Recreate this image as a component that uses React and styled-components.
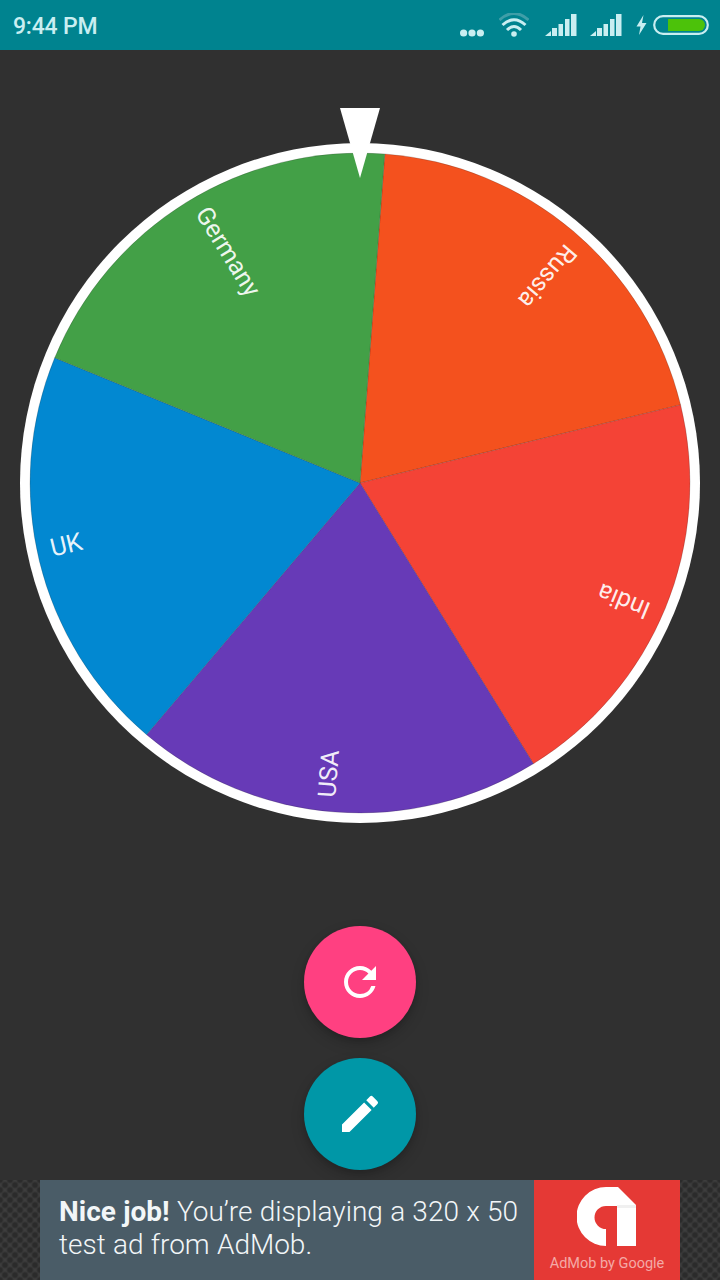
import React from "react";
import styled, { createGlobalStyle } from "styled-components";
import { MdRefresh, MdEdit } from "react-icons/md";

const GlobalStyle = createGlobalStyle`
  html, body {
    margin: 0;
    padding: 0;
    background: #303030;
    font-family: Roboto, "Noto Sans", sans-serif;
  }
`;

const Screen = styled.div`
  display: flex;
  flex-direction: column;
  width: 720px;
  height: 1280px;
  overflow: hidden;
  background: #303030;
`;

const StatusBar = styled.header`
  display: flex;
  align-items: center;
  justify-content: space-between;
  flex: 0 0 50px;
  box-sizing: border-box;
  padding: 0 11px 0 13px;
  background: #00838f;
  color: #c9eef1;
`;

const Time = styled.span`
  padding-top: 2px;
  font-size: 23px;
  font-weight: 500;
  letter-spacing: -0.2px;
`;

const StatusIcons = styled.div`
  display: flex;
  align-items: center;
`;

const StatusSlot = styled.span`
  display: flex;
  margin-left: ${p => p.$left}px;
`;

const Main = styled.main`
  display: flex;
  flex: 1;
  flex-direction: column;
  align-items: center;
`;

const WheelSvg = styled.svg`
  display: block;
  width: 680px;
  height: 715px;
  margin-top: 58px;
`;

const Label = styled.text`
  fill: #fff;
  fill-opacity: 0.92;
  font-family: Roboto, sans-serif;
  font-size: 25px;
  font-weight: 400;
`;

const Actions = styled.div`
  display: flex;
  flex-direction: column;
  gap: 20px;
  margin-top: 103px;
`;

const Fab = styled.button`
  display: flex;
  align-items: center;
  justify-content: center;
  width: 112px;
  height: 112px;
  padding: 0;
  border: 0;
  border-radius: 50%;
  background: ${p => p.$color};
  color: #fff;
  box-shadow: 0 6px 14px rgba(0, 0, 0, 0.18), 0 2px 5px rgba(0, 0, 0, 0.12);
`;

const AdStrip = styled.footer`
  display: flex;
  justify-content: center;
  flex: 0 0 100px;
  background-color: #3d3d3d;
  background-image: radial-gradient(circle, #2b2b2b 2px, transparent 4px),
    radial-gradient(circle, #2b2b2b 2px, transparent 4px);
  background-size: 10px 10px;
  background-position: 0 0, 5px 5px;
`;

const Ad = styled.div`
  display: flex;
  width: 640px;
  background: #4a5c67;
`;

const AdText = styled.p`
  flex: 1;
  margin: 0;
  padding: 15px 0 0 19px;
  color: #f2f6f8;
  font-size: 28px;
  font-weight: 300;
  line-height: 33px;
  word-spacing: 0.4px;

  b {
    font-weight: 700;
  }
`;

const AdBrand = styled.div`
  display: flex;
  flex-direction: column;
  align-items: center;
  width: 146px;
  background: #e53935;
`;

const AdLogo = styled.svg`
  display: block;
  width: 60px;
  height: 60px;
  margin-top: 7px;
`;

const AdCaption = styled.span`
  margin-top: 8px;
  color: #f4a9a6;
  font-size: 14.5px;
  white-space: nowrap;
`;

const CX = 340;
const CY = 375;
const R_OUTER = 340;
const R_INNER = 330;
const START = 4.3;
const STEP = 72;

const slices = [
  { name: "Russia", color: "#f4511e" },
  { name: "India", color: "#f44336" },
  { name: "USA", color: "#673ab7" },
  { name: "UK", color: "#0288d1" },
  { name: "Germany", color: "#43a047" }
];

function point(deg, r) {
  const a = ((deg - 90) * Math.PI) / 180;
  return [CX + r * Math.cos(a), CY + r * Math.sin(a)];
}

function slicePath(i) {
  const [x1, y1] = point(START + i * STEP, R_INNER);
  const [x2, y2] = point(START + (i + 1) * STEP, R_INNER);
  return `M${CX} ${CY}L${x1} ${y1}A${R_INNER} ${R_INNER} 0 0 1 ${x2} ${y2}Z`;
}

const Wheel = () => (
  <WheelSvg viewBox="0 0 680 715">
    <circle cx={CX} cy={CY} r={R_OUTER} fill="#fff" />
    {slices.map((s, i) => {
      const mid = START + (i + 0.5) * STEP;
      return (
        <g key={s.name}>
          <path d={slicePath(i)} fill={s.color} stroke="#222" strokeOpacity="0.5" strokeWidth="0.4" />
          <Label
            transform={`translate(${CX} ${CY}) rotate(${mid + 90}) translate(-316 -1)`}
          >
            {s.name}
          </Label>
        </g>
      );
    })}
    <polygon points="320,0 360,0 340,70" fill="#fff" />
  </WheelSvg>
);

const Dots = () => (
  <svg width="24" height="24" viewBox="0 0 24 24" fill="#c9eef1">
    <circle cx="3.6" cy="20" r="3.6" />
    <circle cx="12" cy="20" r="3.6" />
    <circle cx="20.4" cy="20" r="3.6" />
  </svg>
);

const Wifi = () => (
  <svg width="30" height="24" viewBox="0 0 30 24" fill="none" stroke="#c9eef1" strokeWidth="3">
    <path d="M0.5 7Q15 -6 29.5 7" stroke="#3f9ea8" />
    <path d="M3.5 12Q15 1.5 26.5 12" />
    <path d="M8 17Q15 10 22 17" />
    <circle cx="15" cy="21" r="2.8" fill="#c9eef1" stroke="none" />
  </svg>
);

const Signal = () => (
  <svg width="32" height="24" viewBox="0 0 32 24" fill="#c9eef1">
    <path d="M0 23l6-5v5z" />
    <rect x="7" y="15" width="5" height="8" />
    <rect x="13.5" y="11" width="4.5" height="12" />
    <rect x="20" y="6" width="4.5" height="17" />
    <rect x="26" y="1" width="5.5" height="22" />
  </svg>
);

const Bolt = () => (
  <svg width="11" height="24" viewBox="0 0 11 24" fill="#c9eef1">
    <path d="M7.5 2L0.5 13.5h4L3 22l7.5-12H6z" />
  </svg>
);

const Battery = () => (
  <svg width="56" height="20" viewBox="0 0 56 20">
    <rect x="1.2" y="1.2" width="53.6" height="17.6" rx="8.8" fill="none" stroke="#c9eef1" strokeWidth="2.2" />
    <path d="M15 4h31a6 6 0 0 1 0 12H15z" fill="#4cc20a" />
  </svg>
);

const App = () => (
  <Screen>
    <GlobalStyle />
    <StatusBar>
      <Time>9:44 PM</Time>
      <StatusIcons>
        <StatusSlot $left={0}><Dots /></StatusSlot>
        <StatusSlot $left={15}><Wifi /></StatusSlot>
        <StatusSlot $left={16}><Signal /></StatusSlot>
        <StatusSlot $left={13}><Signal /></StatusSlot>
        <StatusSlot $left={14}><Bolt /></StatusSlot>
        <StatusSlot $left={6}><Battery /></StatusSlot>
      </StatusIcons>
    </StatusBar>
    <Main>
      <Wheel />
      <Actions>
        <Fab $color="#ff4081"><MdRefresh size={48} /></Fab>
        <Fab $color="#0097a7"><MdEdit size={48} /></Fab>
      </Actions>
    </Main>
    <AdStrip>
      <Ad>
        <AdText><b>Nice job!</b> You’re displaying a 320 x 50 test ad from AdMob.</AdText>
        <AdBrand>
          <AdLogo viewBox="0 0 60 60">
            <path d="M29 0H41L59 18V59H40V19H29A11.5 11.5 0 0 0 29 42V59A29.5 29.5 0 0 1 29 0Z" fill="#fff" />
            <path d="M40 18H59V21H40z" fill="#f0f0f0" />
          </AdLogo>
          <AdCaption>AdMob by Google</AdCaption>
        </AdBrand>
      </Ad>
    </AdStrip>
  </Screen>
);

export default App;
